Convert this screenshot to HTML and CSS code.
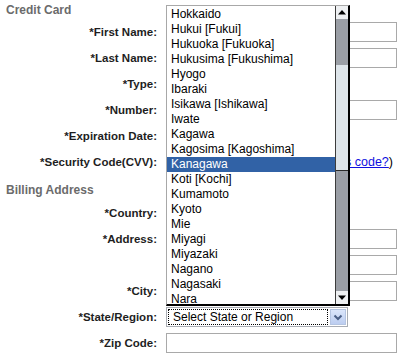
FILE: index.html
```html
<!DOCTYPE html>
<html lang="en">
<head>
    <meta charset="UTF-8">
    <meta name="viewport" content="width=device-width, initial-scale=1.0">
    <title>Payment Details</title>
    <link rel="stylesheet" href="styles.css">
</head>
<body>
    <form class="payment">
        <h3 class="section">Credit Card</h3>
        <div class="row">
            <label>*First Name:</label>
            <input type="text">
        </div>
        <div class="row">
            <label>*Last Name:</label>
            <input type="text">
        </div>
        <div class="row">
            <label>*Type:</label>
            <div class="select-box short"><span class="select-text"></span><span class="select-btn"></span></div>
        </div>
        <div class="row">
            <label>*Number:</label>
            <input type="text">
        </div>
        <div class="row">
            <label>*Expiration Date:</label>
            <div class="select-box short"><span class="select-text"></span><span class="select-btn"></span></div>
        </div>
        <div class="row">
            <label>*Security Code(CVV):</label>
            <div class="cvv">
                <input type="text" class="small">
                <span class="help">(<a href="#">What's this code?</a>)</span>
            </div>
        </div>

        <h3 class="section billing">Billing Address</h3>
        <div class="row">
            <label>*Country:</label>
            <div class="select-box short"><span class="select-text"></span><span class="select-btn"></span></div>
        </div>
        <div class="row">
            <label>*Address:</label>
            <input type="text">
        </div>
        <div class="row">
            <label></label>
            <input type="text">
        </div>
        <div class="row">
            <label>*City:</label>
            <input type="text">
        </div>
        <div class="row">
            <label>*State/Region:</label>
            <div class="state">
                <div class="select-box">
                    <span class="select-text">Select State or Region</span>
                    <span class="select-btn">
                        <svg width="16" height="16" viewBox="0 0 16 16"><path d="M4.5 6.5 L8 10 L11.5 6.5" fill="none" stroke="#4a5f86" stroke-width="2"/></svg>
                    </span>
                </div>
                <!-- open dropdown list -->
                <div class="dropdown">
                    <ul class="options">
                        <li>Hokkaido</li>
                        <li>Hukui [Fukui]</li>
                        <li>Hukuoka [Fukuoka]</li>
                        <li>Hukusima [Fukushima]</li>
                        <li>Hyogo</li>
                        <li>Ibaraki</li>
                        <li>Isikawa [Ishikawa]</li>
                        <li>Iwate</li>
                        <li>Kagawa</li>
                        <li>Kagosima [Kagoshima]</li>
                        <li class="selected">Kanagawa</li>
                        <li>Koti [Kochi]</li>
                        <li>Kumamoto</li>
                        <li>Kyoto</li>
                        <li>Mie</li>
                        <li>Miyagi</li>
                        <li>Miyazaki</li>
                        <li>Nagano</li>
                        <li>Nagasaki</li>
                        <li>Nara</li>
                    </ul>
                    <div class="scrollbar">
                        <div class="sb-btn"><svg width="12" height="13" viewBox="0 0 12 13"><polygon points="2,8.5 10,8.5 6,4" fill="#000"/></svg></div>
                        <div class="sb-track"><div class="sb-thumb"></div></div>
                        <div class="sb-btn"><svg width="12" height="13" viewBox="0 0 12 13"><polygon points="2,4.5 10,4.5 6,9" fill="#000"/></svg></div>
                    </div>
                </div>
            </div>
        </div>
        <div class="row">
            <label>*Zip Code:</label>
            <input type="text">
        </div>
    </form>
</body>
</html>
```

FILE: styles.css
```css
body {
    margin: 0;
    background-color: #fff;
    font-family: "Liberation Sans", Arial, sans-serif;
    color: #222;
}
.payment {
    width: 403px;
}
.section {
    margin: 0;
    padding: 3px 0 2px 6px;
    height: 14px;
    font-size: 12px;
    line-height: 14px;
    font-weight: bold;
    color: #6b6b6b;
}
.section.billing {
    height: 14px;
    padding-top: 8px;
    padding-bottom: 3px;
}
.row {
    display: grid;
    grid-template-columns: 157px 231px;
    column-gap: 9px;
    align-items: center;
    height: 26px;
}
.row label {
    text-align: right;
    font-size: 11.5px;
    font-weight: bold;
    color: #1e1e1e;
}
input {
    box-sizing: border-box;
    width: 231px;
    height: 20px;
    margin: 0;
    border: 1px solid #a9a9a9;
    background: #fff;
}
input.small {
    width: 50px;
}
.cvv {
    display: flex;
    align-items: center;
}
.help {
    margin-left: auto;
    padding-right: 4px;
    font-size: 12.5px;
    color: #000;
}
.help a {
    color: #1010e0;
}

/* select look-alike */
.select-box {
    box-sizing: border-box;
    display: flex;
    align-items: center;
    width: 182px;
    height: 20px;
    padding: 1px;
    border: 1px solid #a9adb4;
    background: #fff;
}
.select-box.short {
    width: 150px;
}
.select-text {
    flex: 1;
    height: 16px;
    box-sizing: border-box;
    padding-left: 4px;
    border: 1px dotted #000;
    font-size: 12px;
    line-height: 14px;
    color: #000;
    white-space: nowrap;
    overflow: hidden;
}
.short .select-text {
    border-color: transparent;
}
.select-btn {
    box-sizing: border-box;
    width: 16px;
    height: 16px;
    margin-left: 2px;
    border: 1px solid #b5c5e2;
    background: linear-gradient(#dbe6fb, #bccdf0);
}
.select-btn svg {
    display: block;
    margin: -1px;
}

/* open state list */
.state {
    position: relative;
}
.dropdown {
    position: absolute;
    left: 0;
    bottom: 100%;
    margin-bottom: 1px;
    display: flex;
    width: 184px;
    height: 301px;
    box-sizing: border-box;
    border-top: 1px solid #a8a8a8;
    border-left: 1px solid #a8a8a8;
    border-right: 2px solid #000;
    border-bottom: 2px solid #000;
    background: #fff;
    overflow: hidden;
}
.options {
    flex: 1;
    margin: 0;
    padding: 1px 0 0;
    list-style: none;
}
.options li {
    height: 15px;
    padding-left: 4px;
    font-size: 12px;
    line-height: 15px;
    color: #000;
    white-space: nowrap;
}
.options li.selected {
    background-color: #3162a6;
    color: #fff;
}
.scrollbar {
    display: flex;
    flex-direction: column;
    width: 12px;
    border-left: 1px solid #3c3c3c;
}
.sb-btn {
    height: 13px;
    background: #eef0f2;
}
.sb-btn svg {
    display: block;
}
.sb-track {
    flex: 1;
    padding-top: 46px;
    background: #9a9ea5;
}
.sb-thumb {
    height: 105px;
    background: #dde4e9;
    border-bottom: 1px solid #2a2a2a;
}
```
